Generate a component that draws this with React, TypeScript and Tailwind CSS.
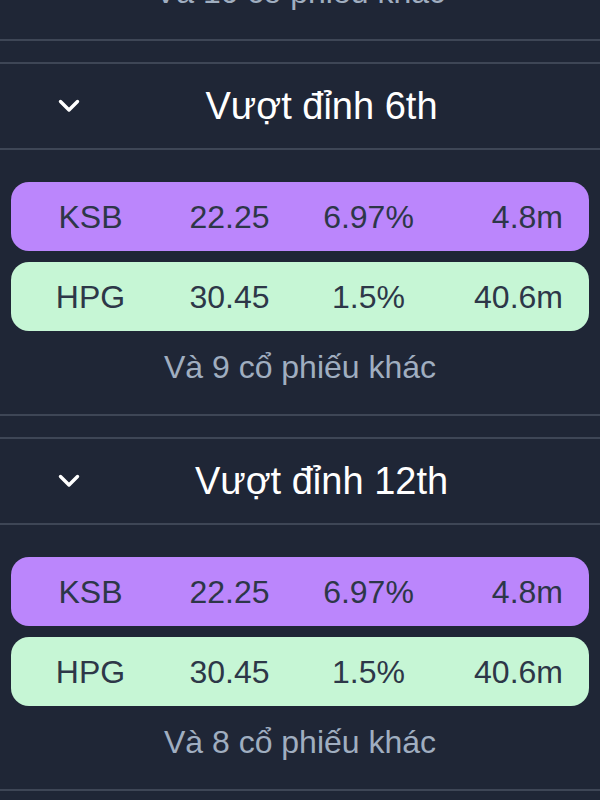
interface StockRow {
  code: string;
  price: string;
  change: string;
  volume: string;
}

interface Group {
  title: string;
  rows: StockRow[];
  more: number;
}

const topRows: StockRow[] = [
  { code: 'KSB', price: '22.25', change: '6.97%', volume: '4.8m' },
  { code: 'HPG', price: '30.45', change: '1.5%', volume: '40.6m' },
];

const groups: Group[] = [
  { title: 'Vượt đỉnh 3th', rows: topRows, more: 10 },
  { title: 'Vượt đỉnh 6th', rows: topRows, more: 9 },
  { title: 'Vượt đỉnh 12th', rows: topRows, more: 8 },
];

function Chevron() {
  return (
    <svg width="22" height="14" viewBox="0 0 22 14" fill="none" className="shrink-0">
      <polyline
        points="2.5,2.5 11,11 19.5,2.5"
        stroke="white"
        strokeWidth="3.4"
        strokeLinecap="round"
        strokeLinejoin="round"
      />
    </svg>
  );
}

function Row({ row, tone }: { row: StockRow; tone: 'up' | 'hold' }) {
  const bg = tone === 'up' ? 'bg-[#bb86fc]' : 'bg-[#c6f6d5]';
  return (
    <div
      className={`${bg} grid h-[69px] grid-cols-[139px_139px_139px_1fr] items-center rounded-[18px] pl-[10px] pr-[26px] text-[32px] text-[#2d3748]`}
    >
      <span className="text-center">{row.code}</span>
      <span className="text-center">{row.price}</span>
      <span className="text-center">{row.change}</span>
      <span className="text-right">{row.volume}</span>
    </div>
  );
}

function GroupCard({ group }: { group: Group }) {
  return (
    <section className="border-y-2 border-[#3e4656]">
      <div className="flex h-[86px] items-center border-b-2 border-[#3e4656] pl-[58px] pr-[37px]">
        <Chevron />
        <h2 className="flex-1 text-center text-[38px] text-white">{group.title}</h2>
      </div>
      <div className="flex flex-col gap-[11px] px-[11px] pt-[32px]">
        {group.rows.map((row, i) => (
          <Row key={row.code} row={row} tone={i === 0 ? 'up' : 'hold'} />
        ))}
      </div>
      <p className="mt-[18px] mb-[29px] h-[36px] text-center text-[32px] leading-[36px] text-[#a0aec0]">
        Và {group.more} cổ phiếu khác
      </p>
    </section>
  );
}

export default function App() {
  return (
    <div
      className="h-[800px] w-[600px] overflow-hidden bg-[#1f2636]"
      style={{ fontFamily: '"Liberation Sans", Arial, sans-serif' }}
    >
      <div className="-mt-[313px] flex flex-col gap-[21px]">
        {groups.map((g) => (
          <GroupCard key={g.title} group={g} />
        ))}
      </div>
    </div>
  );
}
